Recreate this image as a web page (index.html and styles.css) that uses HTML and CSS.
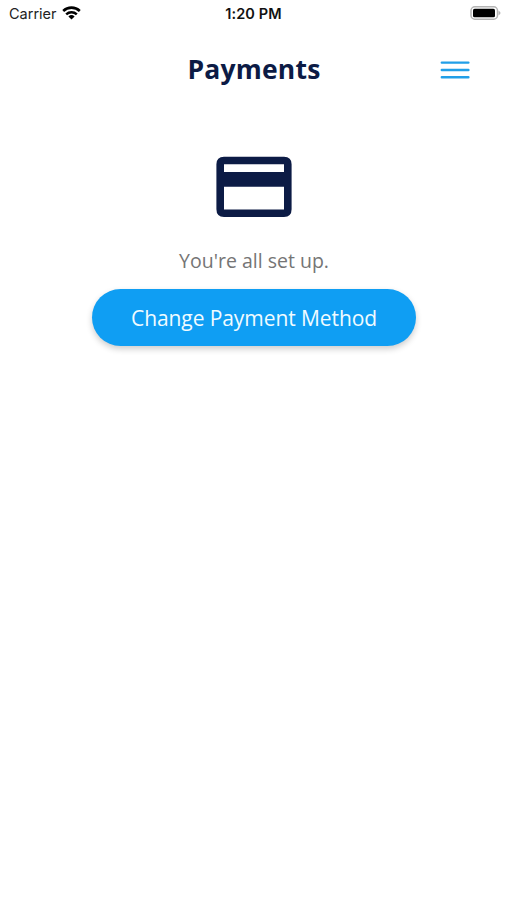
FILE: index.html
```html
<!DOCTYPE html>
<html lang="en">
<head>
<meta charset="utf-8">
<title>Payments</title>
<link rel="stylesheet" href="styles.css">
</head>
<body>
<div class="status">
  <div class="carrier"><span>Carrier</span>
    <svg class="wifi" width="19" height="14" viewBox="0 0 19 14" fill="none" stroke="#000"><path d="M1.200 5a12 12 0 0 1 16.600 0" stroke-width="2.600"/><path d="M4.200 8.300a7.700 7.700 0 0 1 10.600 0" stroke-width="2.500"/><path d="M9.500 13.500 6.400 10.500a4.500 4.500 0 0 1 6.200 0z" fill="#000" stroke="none"/></svg>
  </div>
  <time class="time">1:20 PM</time>
  <svg class="battery" width="31" height="14" viewBox="0 0 31 14"><rect x="1" y=".8" width="26.500" height="12.400" rx="3.800" fill="none" stroke="#b4b4b4" stroke-width="1.500"/><rect x="3" y="2.700" width="22" height="8.600" rx="1.600" fill="#000"/><path d="M28.500 4.700q2 .8 2 2.300t-2 2.300z" fill="#b4b4b4"/></svg>
</div>
<header class="header">
  <h1>Payments</h1>
  <button class="menu" aria-label="Menu"><svg width="30" height="18" viewBox="0 0 30 18" stroke="#219fe8" stroke-width="2.400" stroke-linecap="round"><path d="M1.800 1.600h26.600M1.800 9h26.600M1.800 16.300h26.600"/></svg></button>
</header>
<main class="content">
  <svg class="card" width="76" height="61" viewBox="0 0 76 61"><path fill="#0c1b45" fill-rule="evenodd" d="M8 .7h60q7.600 0 7.600 7.600v45q0 7.600-7.600 7.600H8Q.4 60.900.4 53.300v-45Q.4.700 8 .7zM8 8.300v7.600h60V8.300zM8 30.800v22.700h60V30.800z"/></svg>
  <p>You're all set up.</p>
  <button class="change">Change Payment Method</button>
</main>
</body>
</html>
```
FILE: styles.css
```css
* { box-sizing: border-box; }
body { margin: 0; height: 900px; background: #fff; font-family: "Open Sans", sans-serif; overflow: hidden; }
button { border: 0; padding: 0; font: inherit; }
.status { height: 27px; padding: 0 6px 0 9px; display: grid; grid-template-columns: 1fr auto 1fr; align-items: center; font: 14.5px Inter, sans-serif; color: #222; }
.carrier { display: flex; align-items: center; gap: 5px; }
.wifi { margin-top: -2px; }
.time { font-weight: 600; color: #111; letter-spacing: .1px; margin-right: 3px; }
.battery { justify-self: end; margin-top: -1px; }
.header { height: 85px; display: grid; grid-template-columns: 1fr auto 1fr; align-items: center; padding: 0 37px 1px; }
h1 { grid-column: 2; margin: 0 0 1px 1px; font-size: 26.5px; font-weight: 700; line-height: 36px; letter-spacing: .2px; color: #0c1b45; }
.menu { justify-self: end; width: 30px; height: 18px; margin-top: 1px; background: none; }
.menu svg { display: block; }
.content { padding-top: 44px; display: flex; flex-direction: column; align-items: center; }
.card { display: block; }
p { margin: 30px 0 13.5px 1px; font-size: 19.5px; line-height: 28px; color: #757575; }
.change { width: 324px; height: 57.5px; margin-left: 1px; padding-top: 2px; border-radius: 29px; background: #0f9ef3; color: #f0fbff; font-size: 21px; letter-spacing: -.08px; box-shadow: 0 3px 6px rgba(0,0,0,.2); }
```
